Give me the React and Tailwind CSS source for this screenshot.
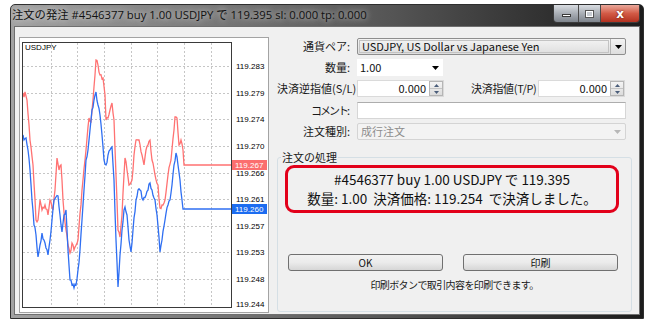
import React from 'react';

// chart traces in page coordinates (x, y), flattened at the right edge
const RED = [
  [23, 93], [24, 97], [25, 92], [27, 100], [30, 140], [33, 165], [36, 220], [38, 220], [40, 200], [42, 210],
  [45, 205], [48, 215], [50, 200], [53, 210], [55, 190], [57, 158], [59, 170], [61, 165], [63, 200], [66, 230],
  [68, 245], [70, 253], [72, 243], [74, 250], [78, 240], [82, 190], [86, 150], [89, 118], [91, 122], [93, 100],
  [95, 75], [96, 60], [98, 65], [100, 75], [103, 78], [105, 95], [106, 120], [108, 118], [110, 110], [112, 103],
  [114, 120], [116, 175], [118, 230], [120, 237], [122, 215], [124, 175], [125, 158], [127, 170], [129, 185],
  [132, 180], [134, 155], [136, 140], [139, 140], [142, 155], [144, 165], [146, 150], [148, 145], [150, 140],
  [152, 160], [155, 175], [158, 185], [160, 208], [162, 205], [165, 200], [168, 175], [171, 160], [174, 130],
  [175, 117], [177, 118], [179, 145], [181, 140], [183, 150], [184, 165], [231, 165]
];

const BLUE = [
  [23, 135], [24, 140], [26, 138], [28, 150], [30, 170], [32, 200], [34, 225], [36, 235], [38, 257], [40, 245],
  [42, 233], [44, 240], [46, 248], [48, 255], [50, 240], [52, 220], [54, 200], [56, 197], [58, 196], [60, 215],
  [62, 232], [64, 215], [66, 210], [68, 250], [70, 280], [72, 285], [74, 288], [76, 285], [78, 270], [80, 250],
  [82, 220], [84, 190], [86, 160], [88, 150], [90, 130], [92, 110], [94, 100], [96, 92], [98, 105], [100, 115],
  [102, 135], [104, 160], [106, 165], [108, 155], [110, 150], [112, 147], [114, 180], [116, 240], [118, 287],
  [120, 255], [122, 230], [124, 210], [125, 207], [127, 215], [129, 240], [131, 252], [133, 230], [136, 200],
  [138, 190], [140, 190], [143, 200], [146, 195], [150, 183], [152, 190], [155, 200], [157, 215], [160, 252],
  [162, 240], [165, 220], [168, 205], [170, 200], [172, 185], [174, 165], [176, 153], [178, 165], [180, 180],
  [182, 200], [183, 209], [231, 209]
];

const GRID_X = [51, 77, 104, 131, 157, 184, 211];
const GRID_Y = [66, 93, 119, 146, 173, 199, 226, 252, 279];
const LEVELS = [
  ['119.283', 66], ['119.279', 93], ['119.274', 119], ['119.270', 146], ['119.266', 173],
  ['119.261', 199], ['119.257', 226], ['119.253', 252], ['119.248', 279], ['119.244', 304]
];

// panel content origin on the page
const OX = 20;
const OY = 38;

function jagged(points, seed) {
  let s = seed;
  const rnd = () => {
    s = (s * 9301 + 49297) % 233280;
    return s / 233280;
  };
  const out = [];
  for (let i = 0; i < points.length - 1; i++) {
    const [x0, y0] = points[i];
    const [x1, y1] = points[i + 1];
    const flat = y0 === y1 && x1 - x0 > 20;
    const steps = Math.max(1, Math.round(x1 - x0));
    for (let k = 0; k < steps; k++) {
      const t = k / steps;
      let y = y0 + (y1 - y0) * t;
      if (!flat && k > 0) y += (rnd() - 0.5) * 5;
      out.push([x0 + (x1 - x0) * t, y]);
    }
  }
  out.push(points[points.length - 1]);
  return out.map(([x, y]) => `${(x - OX).toFixed(1)},${(y - OY).toFixed(1)}`).join(' ');
}

const Chart = () => (
  <svg width="248" height="274" className="block font-['Liberation_Sans',sans-serif]">
    {GRID_X.map((x) => (
      <line key={x} x1={x - OX + 0.5} x2={x - OX + 0.5} y1={5} y2={269} stroke="#c6c6c6" strokeDasharray="2 2" />
    ))}
    {GRID_Y.map((y) => (
      <line key={y} x1={3} x2={211} y1={y - OY + 0.5} y2={y - OY + 0.5} stroke="#c6c6c6" strokeDasharray="2 2" />
    ))}
    <polyline points={jagged(RED, 7)} fill="none" stroke="#ff7272" strokeWidth="1.3" />
    <polyline points={jagged(BLUE, 31)} fill="none" stroke="#2f6ff2" strokeWidth="1.3" />
    <rect x="2.5" y="4.5" width="209" height="265" fill="none" stroke="#3a3a3a" />
    <text x="5" y="12" fontSize="8" fill="#000">USDJPY</text>
    {LEVELS.map(([v, y]) => (
      <text key={v} x="216" y={y - OY + 3} fontSize="8" fill="#000">
        {v}
      </text>
    ))}
    <rect x="212" y="122" width="35" height="10" fill="#fb6e6e" />
    <text x="215" y="130" fontSize="8" fill="#fff">119.267</text>
    <rect x="212" y="166" width="35" height="10" fill="#1c6cf0" />
    <text x="215" y="174" fontSize="8" fill="#fff">119.260</text>
  </svg>
);

const Caret = ({ color = '#000' }) => (
  <svg width="7" height="4" viewBox="0 0 7 4">
    <polygon points="0,0 7,0 3.5,4" fill={color} />
  </svg>
);

const Spinner = () => (
  <div className="flex h-full w-[14px] flex-col border border-[#b5b5b5] bg-gradient-to-b from-[#f4f4f4] to-[#dcdcdc]">
    <div className="flex flex-1 items-center justify-center border-b border-[#c4c4c4]">
      <svg width="5" height="3" viewBox="0 0 5 3"><polygon points="0,3 5,3 2.5,0" fill="#4a5d7a" /></svg>
    </div>
    <div className="flex flex-1 items-center justify-center">
      <svg width="5" height="3" viewBox="0 0 5 3"><polygon points="0,0 5,0 2.5,3" fill="#4a5d7a" /></svg>
    </div>
  </div>
);

const labelCls = 'w-[73px] shrink-0 whitespace-nowrap text-right text-[11px] leading-[17px] text-[#1a1a1a]';

const CaptionButtons = () => (
  <div className="mr-[3px] flex h-[18px] self-start overflow-hidden rounded-b-[4px] border border-t-0 border-[#3b3b3b]">
    <div className="flex w-[25px] items-end justify-center border-r border-[#4a4a4a] bg-gradient-to-b from-[#d9dde2] via-[#a9aeb5] to-[#7f858d] pb-[5px]">
      <div className="h-[3px] w-[9px] border border-[#3a3a3a] bg-white" />
    </div>
    <div className="flex w-[22px] items-center justify-center border-r border-[#4a4a4a] bg-gradient-to-b from-[#d9dde2] via-[#a9aeb5] to-[#7f858d]">
      <div className="h-[8px] w-[9px] border border-[#555] bg-[#c8ccd2] shadow-[inset_0_0_0_1px_#fff]" />
    </div>
    <div className="flex w-[38px] items-center justify-center bg-gradient-to-b from-[#e9a89b] via-[#d25a46] to-[#b3301f]">
      <span className="font-['DejaVu_Sans',sans-serif] text-[12px] font-bold leading-none text-white [text-shadow:0_0_2px_#5a1008]">x</span>
    </div>
  </div>
);

export default function App() {
  return (
    <div className="h-[330px] w-[650px] overflow-hidden bg-white pl-[10px] pt-[4px] font-['Noto_Sans_CJK_JP',sans-serif]">
      <div className="flex h-[315px] w-[634px] flex-col rounded-t-[5px] border border-[#2e2e2e] bg-gradient-to-r from-[#a2a2a2] via-[#555] via-60% to-[#1c1c1c]">
        {/* title bar */}
        <div className="flex h-[21px] shrink-0 items-start justify-between">
          <div className="pl-[1px] pt-[1px] font-['Open_Sans','Noto_Sans_CJK_JP',sans-serif] text-[11.3px] leading-[18px] text-[#111] [text-shadow:0_0_6px_rgba(255,255,255,0.9)]">
            注文の発注 #4546377 buy 1.00 USDJPY で 119.395 sl: 0.000 tp: 0.000
          </div>
          <CaptionButtons />
        </div>

        {/* client area */}
        <div className="mx-[3px] mb-[3px] flex flex-1 border border-[#6f6f6f] bg-[#f0f0f0]">
          <div className="ml-[4px] mt-[10px] h-[276px] w-[250px] shrink-0 border border-[#a3a3a3] bg-white">
            <Chart />
          </div>

          <div className="ml-[8px] mr-[7px] mt-[10px] flex flex-1 flex-col">
            <div className="flex h-[21px] items-start pr-[6px] pt-[1px]">
              <span className={labelCls}>通貨ペア:</span>
              <div className="ml-[7px] flex h-[17px] flex-1 items-center rounded-[2px] border border-[#8e8e8e] bg-gradient-to-b from-[#f4f4f4] to-[#dedede]">
                <div className="m-[1px] flex h-[13px] flex-1 items-center border border-[#c3c3c3] pl-[2px] text-[11px] leading-none text-[#111]">
                  USDJPY, US Dollar vs Japanese Yen
                </div>
                <div className="flex h-full w-[15px] items-center justify-center border-l border-[#b6b6b6]">
                  <Caret />
                </div>
              </div>
            </div>

            <div className="flex h-[21px] items-start pt-[1px]">
              <span className={labelCls}>数量:</span>
              <div className="ml-[7px] flex h-[17px] w-[86px] items-center justify-between bg-white pl-[3px] pr-[4px] text-[11px] text-[#111]">
                <span>1.00</span>
                <Caret />
              </div>
            </div>

            <div className="flex h-[21px] items-start pt-[1px]">
              <span className={labelCls}>決済逆指値(S/L)</span>
              <div className="ml-[7px] flex h-[17px] w-[87px] shrink-0 items-center border border-[#dadada] bg-white">
                <span className="flex-1 pr-[3px] text-right text-[11px] text-[#111]">0.000</span>
                <Spinner />
              </div>
              <span className="ml-[27px] w-[67px] shrink-0 whitespace-nowrap text-[11px] leading-[17px] tracking-[-0.3px] text-[#1a1a1a]">
                決済指値(T/P)
              </span>
              <div className="flex h-[17px] w-[87px] shrink-0 items-center border border-[#dadada] bg-white">
                <span className="flex-1 pr-[3px] text-right text-[11px] text-[#111]">0.000</span>
                <Spinner />
              </div>
            </div>

            <div className="flex h-[21px] items-start pr-[6px] pt-[2px]">
              <span className={labelCls}>
                <span className="tracking-[-2px]">コメント</span>:
              </span>
              <div className="ml-[7px] h-[17px] flex-1 border border-[#d6d6d6] border-t-[#adadad] bg-white" />
            </div>

            <div className="flex h-[21px] items-start pr-[6px] pt-[2px]">
              <span className={labelCls}>注文種別:</span>
              <div className="ml-[7px] flex h-[17px] flex-1 items-center justify-between rounded-[2px] border border-[#d4d4d4] bg-[#f3f3f3] pl-[3px] pr-[4px] text-[11px] text-[#8d8d8d]">
                <span>成行注文</span>
                <Caret color="#b8b8b8" />
              </div>
            </div>

            <fieldset className="mt-[8px] h-[162px] rounded-[3px] border border-[#d5dfe5]">
              <legend className="ml-[3px] px-[1px] text-[11px] leading-[14px] text-[#1a1a1a]">注文の処理</legend>
              <div className="ml-[7px] mt-[1px] flex h-[48px] w-[334px] flex-col items-center justify-center rounded-[9px] border-[3px] border-[#e2001a] text-[13.5px] leading-[19.5px] text-[#111]">
                <div>#4546377 buy 1.00 USDJPY で 119.395</div>
                <div className="whitespace-pre">数量: 1.00  決済価格: 119.254  で決済しました。</div>
              </div>
              <div className="ml-[10px] mt-[41px] flex gap-[20px]">
                <button className="h-[17px] w-[155px] rounded-[3px] border border-[#707070] bg-gradient-to-b from-[#f2f2f2] via-[#ebebeb] to-[#d6d6d6] text-[10px] leading-none text-[#111]">
                  OK
                </button>
                <button className="h-[17px] w-[155px] rounded-[3px] border border-[#707070] bg-gradient-to-b from-[#f2f2f2] via-[#ebebeb] to-[#d6d6d6] text-[10px] leading-none text-[#111]">
                  印刷
                </button>
              </div>
              <div className="mt-[7px] text-center text-[10px] leading-[14px] tracking-[-0.6px] text-[#1a1a1a]">
                印刷ボタンで取引内容を印刷できます。
              </div>
            </fieldset>
          </div>
        </div>
      </div>
    </div>
  );
}
